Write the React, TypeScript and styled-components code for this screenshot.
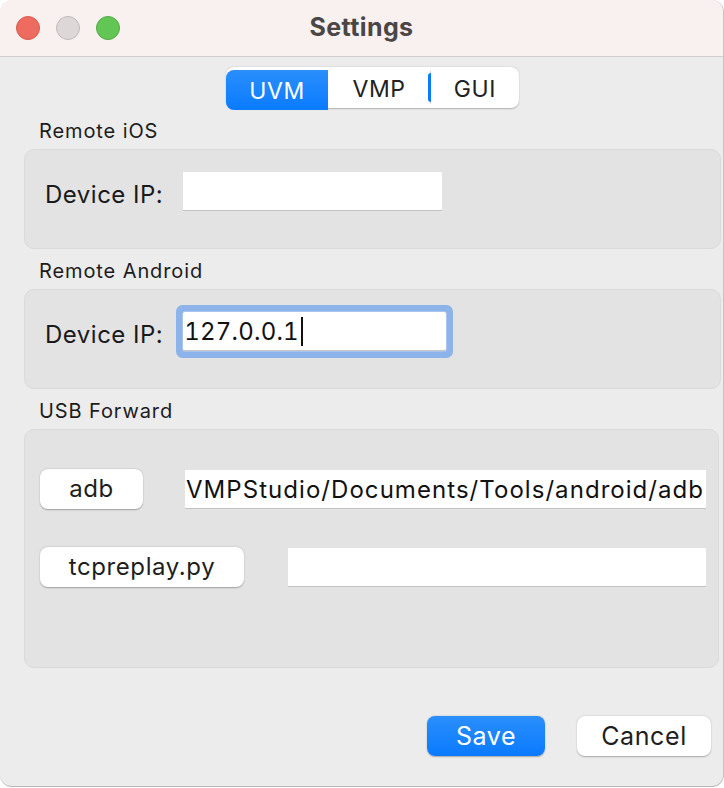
import React from "react";
import styled, { createGlobalStyle } from "styled-components";

const Global = createGlobalStyle`
  html, body { margin: 0; padding: 0; background: #ffffff; }
  body { font-family: "Inter", "Roboto", "Liberation Sans", sans-serif; -webkit-font-smoothing: antialiased; }
  * { box-sizing: border-box; }
`;

const Window = styled.div`
  width: 724px;
  height: 787px;
  background: #ececec;
  border-radius: 12px;
  border-right: 1px solid #c4c4c4;
  border-bottom: 1px solid #b8b8b8;
  overflow: hidden;
  display: flex;
  flex-direction: column;
`;

const TitleBar = styled.div`
  height: 57px;
  flex: none;
  background: #f9f0f0;
  border-bottom: 1px solid #d3cdcd;
  display: grid;
  grid-template-columns: 1fr auto 1fr;
  align-items: center;
  padding: 0 16px;
`;

const Lights = styled.div`
  display: flex;
  gap: 16px;
`;

const Light = styled.span<{ $color: string; $edge: string }>`
  width: 24px;
  height: 24px;
  border-radius: 50%;
  background: ${(p) => p.$color};
  border: 1px solid ${(p) => p.$edge};
`;

const Title = styled.div`
  font-size: 25px;
  font-weight: 700;
  color: #4b4646;
  letter-spacing: 0.4px;
  margin-top: -2px;
`;

const Content = styled.div`
  flex: 1;
  display: flex;
  flex-direction: column;
  padding: 10px 2px 0 24px;
`;

const TabsRow = styled.div`
  display: flex;
  justify-content: center;
`;

const Segmented = styled.div`
  display: flex;
  background: #ffffff;
  border-radius: 8px;
  box-shadow: 0 0.5px 1.5px rgba(0, 0, 0, 0.25);
  height: 41px;
  align-items: stretch;
  position: relative;
`;

const Segment = styled.div<{ $active?: boolean; $w: number }>`
  width: ${(p) => p.$w}px;
  display: flex;
  align-items: center;
  justify-content: center;
  padding-top: 2px;
  font-size: 23px;
  letter-spacing: 0.6px;
  color: ${(p) => (p.$active ? "#ffffff" : "#222222")};
  background: ${(p) => (p.$active ? "linear-gradient(#2a8ffb, #0a7bff)" : "transparent")};
  border-radius: ${(p) => (p.$active ? "8px 0 0 8px" : "0")};
  margin: ${(p) => (p.$active ? "3px 0 -2px 0" : "0")};
  position: relative;
`;

const Divider = styled.span`
  width: 1px;
  background: #d6d6d6;
  margin: 4px 0;
  position: relative;
  &::before {
    content: "";
    position: absolute;
    left: -2px;
    top: 2px;
    bottom: 2px;
    width: 3px;
    border-radius: 3px 0 0 3px;
    background: #0a7bff;
  }
`;

const SectionLabel = styled.div<{ $top: number }>`
  font-size: 20px;
  letter-spacing: 0.9px;
  color: #1c1c1c;
  line-height: 22px;
  margin: ${(p) => p.$top}px 0 7px 15px;
`;

const Group = styled.div<{ $h: number; $pt: number; $gap?: number; $right?: number }>`
  height: ${(p) => p.$h}px;
  margin-right: ${(p) => p.$right ?? 0}px;
  background: #e3e3e3;
  border: 1px solid #dadada;
  border-radius: 10px;
  padding: ${(p) => p.$pt}px 12px 0 15px;
  display: flex;
  flex-direction: column;
  gap: ${(p) => p.$gap ?? 0}px;
`;

const Row = styled.div`
  display: flex;
  align-items: center;
`;

const FieldLabel = styled.label`
  font-size: 24px;
  letter-spacing: 0.5px;
  color: #1a1a1a;
  margin: 5px 20px 0 5px;
  white-space: nowrap;
`;

const Field = styled.div<{ $w?: number; $focus?: boolean; $ml?: number }>`
  width: ${(p) => (p.$w ? `${p.$w}px` : "auto")};
  flex: ${(p) => (p.$w ? "none" : "1")};
  margin-left: ${(p) => p.$ml ?? 0}px;
  height: 39px;
  background: #ffffff;
  border-bottom: 1px solid #c3c3c3;
  display: flex;
  align-items: center;
  padding: 1px 3px 0 1px;
  font-size: 24px;
  letter-spacing: 1.05px;
  color: #111;
  white-space: nowrap;
  overflow: hidden;
  ${(p) =>
    p.$focus
      ? `border-radius: 2px; box-shadow: 0 0 0 1px #a8c5ee, 0 0 0 7px #8cb3ea;`
      : ""}
`;

const Digits = styled.span`
  font-feature-settings: "tnum";
  letter-spacing: 0.2px;
`;

const Caret = styled.span`
  display: inline-block;
  width: 2px;
  height: 29px;
  background: #111;
  margin-left: 2px;
`;

const PushButton = styled.button<{ $w: number; $primary?: boolean }>`
  width: ${(p) => p.$w}px;
  height: 40px;
  flex: none;
  border: none;
  border-radius: 8px;
  font-family: inherit;
  font-size: ${(p) => (p.$primary !== undefined ? 25 : 24)}px;
  letter-spacing: 0.6px;
  color: ${(p) => (p.$primary ? "#ffffff" : "#1e1e1e")};
  background: ${(p) => (p.$primary ? "linear-gradient(#2b8ffb, #0a7aff)" : "#ffffff")};
  box-shadow: 0 0.5px 1.5px rgba(0, 0, 0, 0.3);
  padding: 0;
  padding-bottom: 1px;
`;

const Footer = styled.div`
  display: flex;
  justify-content: flex-end;
  gap: 32px;
  margin-top: 48px;
  padding-right: 10px;
`;

export default function App() {
  return (
    <>
      <Global />
      <Window>
        <TitleBar>
          <Lights>
            <Light $color="#ee6b5f" $edge="#d85a4f" />
            <Light $color="#ddd7d8" $edge="#c2babb" />
            <Light $color="#62c655" $edge="#52a947" />
          </Lights>
          <Title>Settings</Title>
          <span />
        </TitleBar>
        <Content>
          <TabsRow>
            <Segmented>
              <Segment $active $w={102}>UVM</Segment>
              <Segment $w={102}>VMP</Segment>
              <Divider />
              <Segment $w={88}>GUI</Segment>
            </Segmented>
          </TabsRow>

          <SectionLabel $top={12}>Remote iOS</SectionLabel>
          <Group $h={100} $pt={22}>
            <Row>
              <FieldLabel>Device IP:</FieldLabel>
              <Field $w={259} />
            </Row>
          </Group>

          <SectionLabel $top={11}>Remote Android</SectionLabel>
          <Group $h={100} $pt={22}>
            <Row>
              <FieldLabel>Device IP:</FieldLabel>
              <Field $w={263} $focus>
                <Digits>127.0.0.1</Digits>
                <Caret />
              </Field>
            </Row>
          </Group>

          <SectionLabel $top={11}>USB Forward</SectionLabel>
          <Group $h={239} $pt={39} $gap={38} $right={2}>
            <Row>
              <PushButton $w={103}>adb</PushButton>
              <Field $ml={42}>VMPStudio/Documents/Tools/android/adb</Field>
            </Row>
            <Row>
              <PushButton $w={204}>tcpreplay.py</PushButton>
              <Field $ml={44} />
            </Row>
          </Group>

          <Footer>
            <PushButton $w={118} $primary>
              Save
            </PushButton>
            <PushButton $w={134} $primary={false}>
              Cancel
            </PushButton>
          </Footer>
        </Content>
      </Window>
    </>
  );
}
